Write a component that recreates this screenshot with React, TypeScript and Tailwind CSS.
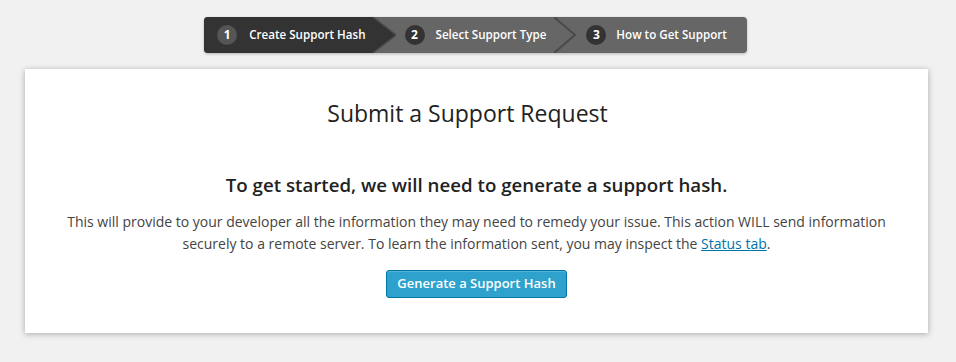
import type { ReactNode } from 'react'

const font = { fontFamily: '"Open Sans", "Liberation Sans", sans-serif' }

function StepNumber({ n, dark }: { n: number; dark?: boolean }) {
  return (
    <span
      className={`flex h-5 w-5 shrink-0 items-center justify-center rounded-full text-[12px] font-bold text-white ${
        dark ? 'bg-[#333]' : 'bg-[#555]'
      }`}
    >
      {n}
    </span>
  )
}

function StepLabel({ children }: { children: ReactNode }) {
  return <span className="whitespace-nowrap text-[11.6px] font-semibold text-white">{children}</span>
}

export default function App() {
  return (
    <div className="min-h-[362px] w-full bg-[#f1f1f1] pt-[17px] pb-[29px]" style={font}>
      <div className="flex justify-center pr-[5px]">
        <div className="flex h-9 items-stretch overflow-hidden rounded-[4px] bg-[#666] shadow-[0_1px_3px_rgba(0,0,0,0.25)]">
          <div className="flex items-center gap-[12px] bg-[#333] pl-[13px] pr-[7px]">
            <StepNumber n={1} />
            <StepLabel>Create Support Hash</StepLabel>
          </div>
          <svg width="23" height="36" viewBox="0 0 23 36" className="shrink-0">
            <polygon points="0,0 23,18 0,36" fill="#333" />
            <polyline points="0,0 23,18 0,36" fill="none" stroke="#4a4a4a" strokeWidth="1.5" />
          </svg>
          <div className="flex items-center gap-[11px] pl-[9px] pr-[8px]">
            <StepNumber n={2} dark />
            <StepLabel>Select Support Type</StepLabel>
          </div>
          <svg width="22" height="36" viewBox="0 0 22 36" className="shrink-0">
            <polygon points="0,0 22,18 0,36 -2,36 20,18 -2,0" fill="#5d5d5d" />
            <polyline points="0,0 21,18 0,36" fill="none" stroke="#4a4a4a" strokeWidth="2" />
          </svg>
          <div className="flex items-center gap-[10px] pl-[10px] pr-[20px]">
            <StepNumber n={3} dark />
            <StepLabel>How to Get Support</StepLabel>
          </div>
        </div>
      </div>

      <div className="ml-[25px] mt-4 w-[903px] bg-white pt-[29px] pb-[35px] text-center shadow-[0_1px_6px_rgba(0,0,0,0.3)]">
        <h1 className="pr-[18px] text-[23px] leading-[30px] font-normal text-[#222]">Submit a Support Request</h1>
        <h2 className="mt-[44px] text-[18.7px] leading-[26px] font-semibold text-[#222]">
          To get started, we will need to generate a support hash.
        </h2>
        <p className="mx-auto mt-[13px] max-w-[830px] text-[14px] leading-[22px] text-[#444]">
          This will provide to your developer all the information they may need to remedy your issue. This action WILL
          send information securely to a remote server. To learn the information sent, you may inspect the{' '}
          <a href="#" className="text-[#0073aa] underline">
            Status tab
          </a>
          .
        </p>
        <button
          type="button"
          className="mt-[15px] h-7 rounded-[3px] border border-[#0074a2] bg-[#2ea2cc] px-[10px] text-[13px] font-semibold text-white shadow-[inset_0_1px_0_rgba(120,200,230,0.5)]"
        >
          Generate a Support Hash
        </button>
      </div>
    </div>
  )
}
